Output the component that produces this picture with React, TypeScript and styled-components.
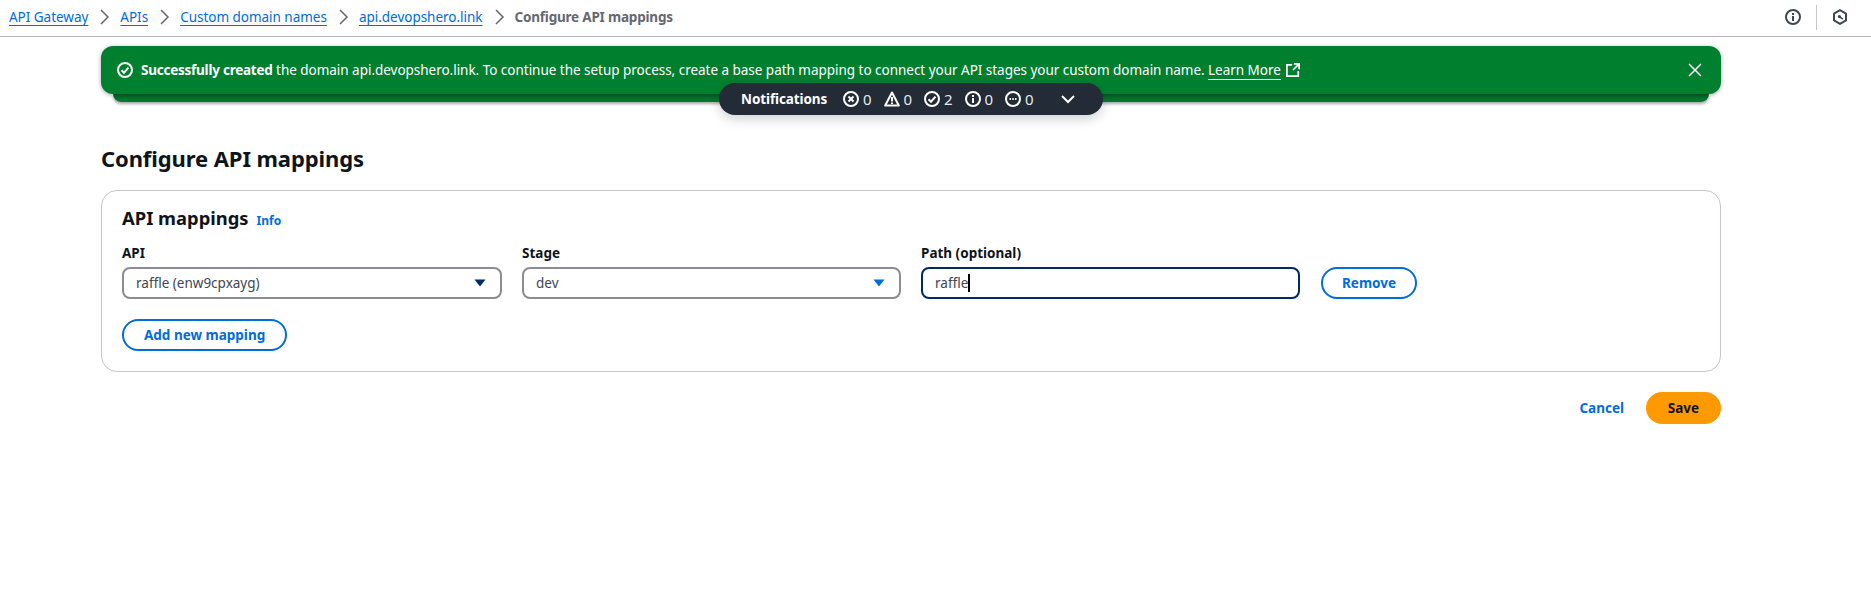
import React from 'react'
import styled, { createGlobalStyle } from 'styled-components'

const GlobalStyle = createGlobalStyle`
  html, body {
    margin: 0;
    padding: 0;
    background: #fff;
  }
  body {
    font-family: "Noto Sans", "Open Sans", sans-serif;
    font-size: 13.5px;
    color: #0f141a;
  }
`

const blue = '#006ce0'
const green = '#00802f'

const TopBar = styled.header`
  display: flex;
  align-items: center;
  justify-content: space-between;
  height: 34px;
  padding: 0 23px 2px 9px;
  border-bottom: 1px solid #b4b4bb;
`

const Crumbs = styled.nav`
  display: flex;
  align-items: center;
  gap: 8px;
`

const CrumbLink = styled.a`
  color: ${blue};
  text-decoration: underline;
  text-underline-offset: 3px;
  letter-spacing: -0.02px;
`

const CrumbCurrent = styled.span`
  color: #656871;
  font-weight: 700;
  letter-spacing: -0.2px;
`

const Chevron = styled.svg`
  width: 16px;
  height: 16px;
  fill: none;
  stroke: #656871;
  stroke-width: 1.5;
`

const TopActions = styled.div`
  display: flex;
  align-items: center;
`

const TopIcon = styled.svg`
  width: 16px;
  height: 16px;
  display: block;
  fill: none;
  stroke: #424650;
  stroke-width: 2;
`

const TopDivider = styled.span`
  width: 1px;
  height: 25px;
  margin: 0 15px;
  background: #c6c6cd;
`

const Main = styled.main`
  padding: 9px 150px 0 101px;
`

const Flash = styled.div`
  position: relative;
  margin-bottom: 41px;
`

const FlashBox = styled.div`
  position: relative;
  z-index: 1;
  display: flex;
  align-items: center;
  height: 48px;
  padding: 0 18px 0 16px;
  border-radius: 12px;
  background: ${green};
  color: #fff;
  box-shadow: 0 1px 4px rgba(0, 7, 22, 0.35);
`

const FlashIcon = styled.svg`
  width: 16px;
  height: 16px;
  flex: none;
  margin-right: 8px;
  fill: none;
  stroke: #fff;
  stroke-width: 2;
`

const FlashText = styled.div`
  flex: 1;
  white-space: nowrap;
  letter-spacing: -0.025px;

  strong {
    letter-spacing: -0.24px;
  }
`

const FlashLink = styled.a`
  color: #fff;
  text-decoration: underline;
  text-underline-offset: 4px;
`

const ExternalIcon = styled.svg`
  width: 14px;
  height: 14px;
  margin-left: 5px;
  vertical-align: -2px;
  fill: none;
  stroke: #fff;
  stroke-width: 2;
`

const CloseIcon = styled.svg`
  width: 16px;
  height: 16px;
  flex: none;
  fill: none;
  stroke: #fff;
  stroke-width: 1.5;
`

const FlashBack = styled.div`
  height: 8px;
  margin: 0 12px;
  border-radius: 0 0 12px 12px;
  background: linear-gradient(#05662a, #037a2e);
  box-shadow: 0 2px 3px rgba(0, 7, 22, 0.35);
`

const Pill = styled.div`
  position: absolute;
  z-index: 2;
  top: 37px;
  left: 618px;
  display: flex;
  align-items: center;
  width: 384px;
  height: 32px;
  box-sizing: border-box;
  padding-left: 22px;
  border-radius: 16px;
  background: #232b37;
  color: #fff;
  box-shadow: 0 4px 12px rgba(0, 7, 22, 0.18);
`

const PillTitle = styled.strong`
  width: 86px;
  margin-right: 16px;
  white-space: nowrap;
  letter-spacing: -0.1px;
`

const Count = styled.span`
  display: flex;
  align-items: center;
  gap: 4px;
  width: 40.5px;
  font-size: 15px;
  color: #e8e9eb;
`

const PillIcon = styled.svg`
  width: 16px;
  height: 16px;
  fill: none;
  stroke: #fff;
  stroke-width: 2;
`

const PillToggle = styled.svg`
  width: 16px;
  height: 16px;
  margin-left: 14px;
  fill: none;
  stroke: #fff;
  stroke-width: 2;
`

const PageTitle = styled.h1`
  margin: 0 0 17px;
  font-size: 22px;
  line-height: 30px;
  font-weight: 700;
  letter-spacing: -0.1px;
`

const Card = styled.section`
  box-sizing: border-box;
  height: 182px;
  padding: 15px 20px 16px;
  border: 1px solid #c6c6cd;
  border-radius: 16px;
`

const CardHead = styled.div`
  display: flex;
  align-items: baseline;
  gap: 8px;
  margin-bottom: 14px;
`

const CardTitle = styled.h2`
  margin: 0;
  font-size: 18.4px;
  line-height: 24px;
  font-weight: 700;
`

const InfoLink = styled.a`
  color: ${blue};
  font-size: 12px;
  font-weight: 700;
  text-decoration: none;
`

const MappingRow = styled.div`
  display: grid;
  grid-template-columns: 380px 379px 379px auto;
  column-gap: 20px;
  align-items: end;
  justify-content: start;
`

const Field = styled.div`
  display: flex;
  flex-direction: column;
`

const Label = styled.label`
  margin-bottom: 5px;
  line-height: 18px;
  font-weight: 700;
`

const Select = styled.div`
  display: flex;
  align-items: center;
  justify-content: space-between;
  box-sizing: border-box;
  height: 32px;
  padding: 0 12px;
  border: 2px solid #8c8c94;
  border-radius: 8px;
  color: #424650;
`

const Caret = styled.svg<{ $tone: string }>`
  width: 16px;
  height: 16px;
  fill: ${p => p.$tone};
`

const PathInput = styled.div`
  display: flex;
  align-items: center;
  box-sizing: border-box;
  height: 32px;
  padding: 0 12px;
  border: 2px solid #002a66;
  border-radius: 8px;
  color: #424650;
`

const TextCaret = styled.span`
  width: 1.5px;
  height: 18px;
  background: #000;
`

const OutlineButton = styled.button`
  box-sizing: border-box;
  height: 32px;
  padding: 0 20px;
  border: 2px solid ${blue};
  border-radius: 20px;
  background: #fff;
  color: ${blue};
  font: 700 13.5px "Noto Sans", "Open Sans", sans-serif;
`

const RemoveButton = styled(OutlineButton)`
  width: 96px;
  margin-left: 1px;
  padding: 0;
`

const AddButton = styled(OutlineButton)`
  margin-top: 20px;
`

const Footer = styled.div`
  display: flex;
  align-items: center;
  justify-content: flex-end;
  gap: 22px;
  margin-top: 20px;
`

const CancelLink = styled.a`
  color: ${blue};
  font-weight: 700;
  text-decoration: none;
`

const SaveButton = styled.button`
  box-sizing: border-box;
  width: 75px;
  height: 32px;
  border: 0;
  border-radius: 20px;
  background: #ff9900;
  color: #0f141a;
  font: 700 13.5px "Noto Sans", "Open Sans", sans-serif;
`

const crumbs = ['API Gateway', 'APIs', 'Custom domain names', 'api.devopshero.link']

const CircleCheck = () => (
  <>
    <circle cx="8" cy="8" r="7" />
    <path d="M4.5 8.2 7 10.7l4.5-5" />
  </>
)

const counts: [React.ReactNode, number][] = [
  [<><circle cx="8" cy="8" r="7" /><path d="m5.5 5.5 5 5m0-5-5 5" /></>, 0],
  [<><path d="M8 1.5 1.2 14.5h13.6z" strokeLinejoin="round" /><path d="M8 6v4.5M8 11.5v1.5" /></>, 0],
  [<CircleCheck />, 2],
  [<><circle cx="8" cy="8" r="7" /><path d="M8 7v5M8 4v2" /></>, 0],
  [<><circle cx="8" cy="8" r="7" /><path d="M4.5 8h1.5M7.25 8h1.5M10 8h1.5" /></>, 0],
]

export default function App() {
  return (
    <>
      <GlobalStyle />
      <TopBar>
        <Crumbs>
          {crumbs.map(c => (
            <React.Fragment key={c}>
              <CrumbLink href="#">{c}</CrumbLink>
              <Chevron viewBox="0 0 16 16"><path d="m5 1 7 7-7 7" /></Chevron>
            </React.Fragment>
          ))}
          <CrumbCurrent>Configure API mappings</CrumbCurrent>
        </Crumbs>
        <TopActions>
          <TopIcon viewBox="0 0 16 16">
            <circle cx="8" cy="8" r="7" />
            <path d="M8 7v5M8 4v2" />
          </TopIcon>
          <TopDivider />
          <TopIcon viewBox="0 0 16 16">
            <path d="M8 1.2 14 4.6v6.8L8 14.8l-6-3.4V4.6z" strokeLinejoin="round" />
            <circle cx="7.4" cy="7.6" r="1.6" fill="#424650" stroke="none" />
            <path d="m7.4 7.6 3.4 2.6" strokeWidth="1.6" />
          </TopIcon>
        </TopActions>
      </TopBar>
      <Main>
        <Flash>
          <FlashBox>
            <FlashIcon viewBox="0 0 16 16"><CircleCheck /></FlashIcon>
            <FlashText>
              <strong>Successfully created</strong> the domain api.devopshero.link. To continue the setup process, create a base path mapping to connect your API stages your custom domain name.{' '}
              <FlashLink href="#">Learn More</FlashLink>
              <ExternalIcon viewBox="0 0 16 16">
                <path d="M14 9v6H1V2h6M9 1h6v6M15 1 8 8" />
              </ExternalIcon>
            </FlashText>
            <CloseIcon viewBox="0 0 16 16"><path d="m2 2 12 12M14 2 2 14" /></CloseIcon>
          </FlashBox>
          <FlashBack />
          <Pill>
            <PillTitle>Notifications</PillTitle>
            {counts.map(([icon, n], i) => (
              <Count key={i}>
                <PillIcon viewBox="0 0 16 16">{icon}</PillIcon>
                {n}
              </Count>
            ))}
            <PillToggle viewBox="0 0 16 16"><path d="m2 5 6 6 6-6" /></PillToggle>
          </Pill>
        </Flash>
        <PageTitle>Configure API mappings</PageTitle>
        <Card>
          <CardHead>
            <CardTitle>API mappings</CardTitle>
            <InfoLink href="#">Info</InfoLink>
          </CardHead>
          <MappingRow>
            <Field>
              <Label>API</Label>
              <Select>
                raffle (enw9cpxayg)
                <Caret $tone="#002a66" viewBox="0 0 16 16"><path d="M2.5 4.5h11L8 11.5z" /></Caret>
              </Select>
            </Field>
            <Field>
              <Label>Stage</Label>
              <Select>
                dev
                <Caret $tone={blue} viewBox="0 0 16 16"><path d="M2.5 4.5h11L8 11.5z" /></Caret>
              </Select>
            </Field>
            <Field>
              <Label>Path (optional)</Label>
              <PathInput>raffle<TextCaret /></PathInput>
            </Field>
            <RemoveButton>Remove</RemoveButton>
          </MappingRow>
          <AddButton>Add new mapping</AddButton>
        </Card>
        <Footer>
          <CancelLink href="#">Cancel</CancelLink>
          <SaveButton>Save</SaveButton>
        </Footer>
      </Main>
    </>
  )
}
